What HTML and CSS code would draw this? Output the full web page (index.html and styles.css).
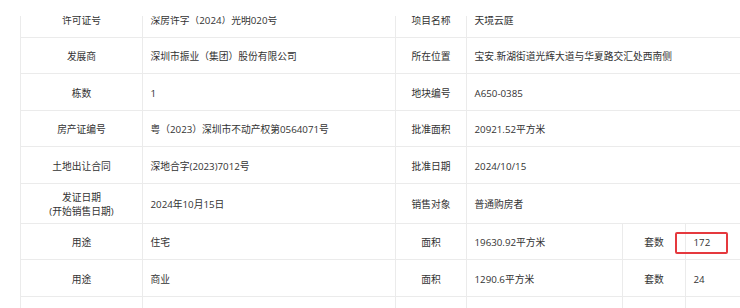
FILE: index.html
```html
<!DOCTYPE html>
<html lang="zh-CN">
<head>
<meta charset="utf-8">
<title>项目信息</title>
<link rel="stylesheet" href="styles.css">
</head>
<body>
<div class="viewport">
  <div class="info-grid">
    <div class="cell label">许可证号</div>
    <div class="cell value">深房许字（2024）光明020号</div>
    <div class="cell label">项目名称</div>
    <div class="cell value wide">天境云庭</div>

    <div class="cell label">发展商</div>
    <div class="cell value">深圳市振业（集团）股份有限公司</div>
    <div class="cell label">所在位置</div>
    <div class="cell value wide">宝安.新湖街道光辉大道与华夏路交汇处西南侧</div>

    <div class="cell label">栋数</div>
    <div class="cell value">1</div>
    <div class="cell label">地块编号</div>
    <div class="cell value wide">A650-0385</div>

    <div class="cell label">房产证编号</div>
    <div class="cell value">粤（2023）深圳市不动产权第0564071号</div>
    <div class="cell label">批准面积</div>
    <div class="cell value wide">20921.52平方米</div>

    <div class="cell label">土地出让合同</div>
    <div class="cell value">深地合字(2023)7012号</div>
    <div class="cell label">批准日期</div>
    <div class="cell value wide">2024/10/15</div>

    <div class="cell label">发证日期<br>(开始销售日期)</div>
    <div class="cell value">2024年10月15日</div>
    <div class="cell label">销售对象</div>
    <div class="cell value wide">普通购房者</div>

    <div class="cell label">用途</div>
    <div class="cell value">住宅</div>
    <div class="cell label">面积</div>
    <div class="cell value">19630.92平方米</div>
    <div class="cell label">套数</div>
    <div class="cell value"><span class="marked">172</span></div>

    <div class="cell label">用途</div>
    <div class="cell value">商业</div>
    <div class="cell label">面积</div>
    <div class="cell value">1290.6平方米</div>
    <div class="cell label">套数</div>
    <div class="cell value">24</div>

    <div class="cell label"></div>
    <div class="cell value"></div>
    <div class="cell label"></div>
    <div class="cell value"></div>
    <div class="cell label"></div>
    <div class="cell value"></div>
  </div>
</div>
</body>
</html>
```
FILE: styles.css
```css
html, body {
  margin: 0;
  padding: 0;
  background: #ffffff;
}

body {
  font-family: "Open Sans", "Noto Sans CJK SC", sans-serif;
  font-size: 9.75px;
  color: #333333;
  width: 740px;
  height: 308px;
  overflow: hidden;
}

.viewport {
  margin-top: 16px;
  height: 292px;
  overflow: hidden;
}

.info-grid {
  margin-top: -15px;
  margin-left: 20px;
  width: 766px;
  display: grid;
  grid-template-columns: 122px 253px 71px 156px 63px 100px;
  grid-template-rows: repeat(5, 36.5px) 40px repeat(3, 36.5px);
  border-left: 1px solid #ebebeb;
}

.cell {
  box-sizing: border-box;
  border-right: 1px solid #ebebeb;
  border-bottom: 1px solid #ebebeb;
  display: flex;
  align-items: center;
  line-height: 13.7px;
  white-space: nowrap;
  padding-top: 3.5px;
}

.cell.label {
  justify-content: center;
  text-align: center;
}

.cell.value {
  padding-left: 7.5px;
}

.cell.wide {
  grid-column: 4 / span 3;
}

.marked {
  position: relative;
  display: inline-block;
  line-height: 13.7px;
}

.marked::after {
  content: "";
  position: absolute;
  left: -19px;
  right: -18px;
  top: -4px;
  bottom: -4.5px;
  border: 2px solid #e5393e;
  border-radius: 2px;
}
```
